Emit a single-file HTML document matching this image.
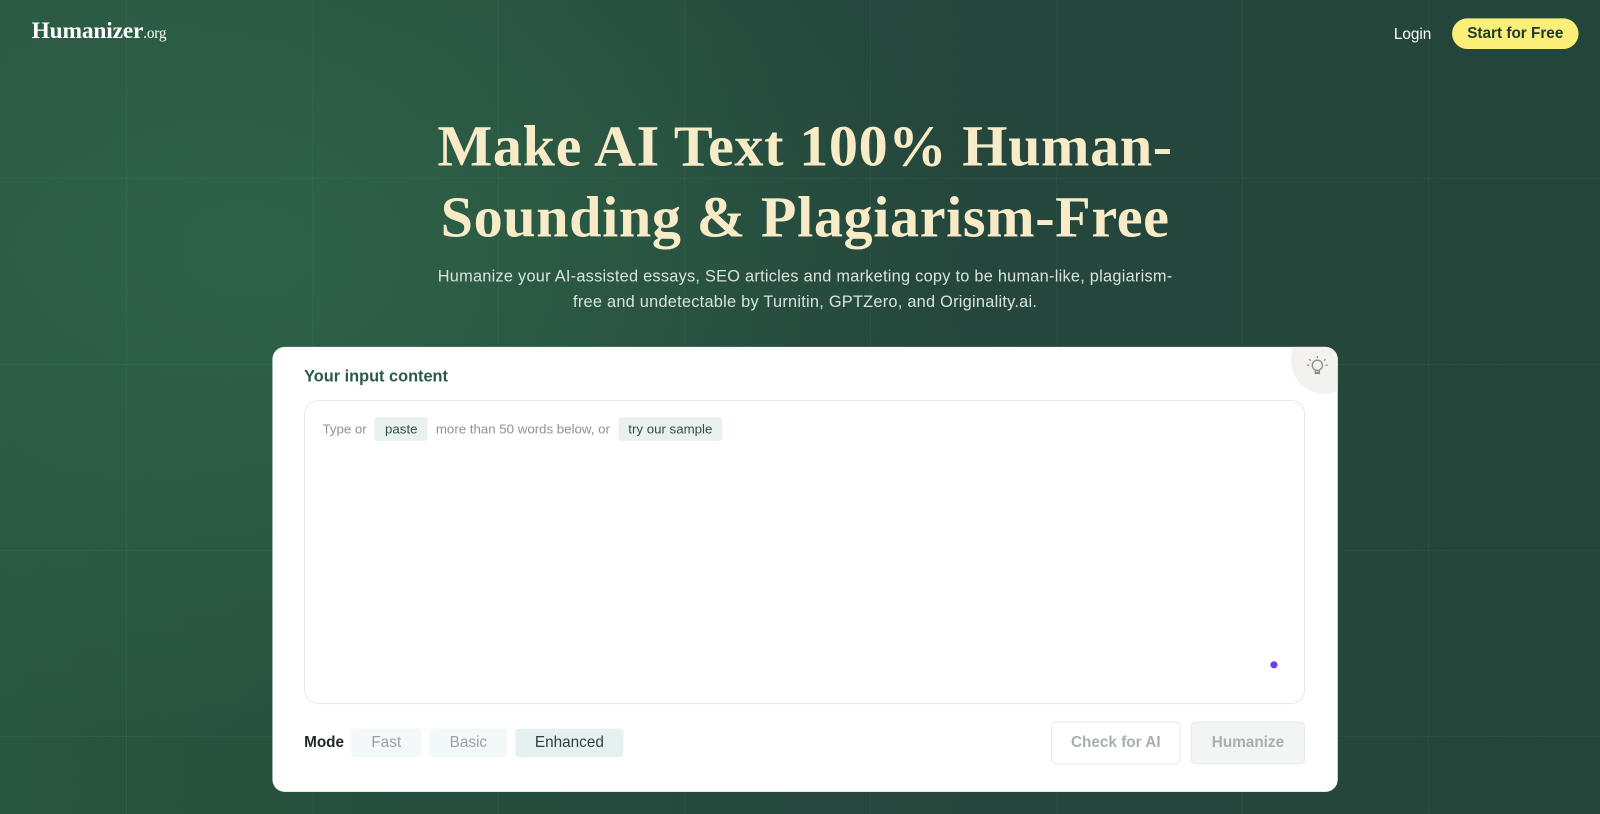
<!DOCTYPE html>
<html><head><meta charset="utf-8"><style>
*{margin:0;padding:0;box-sizing:border-box}
html,body{width:1600px;height:814px;overflow:hidden}
body{font-family:"Liberation Sans",sans-serif;
background:radial-gradient(ellipse 700px 500px at 250px 250px,#2e6348 0%,rgba(46,99,72,0) 100%),linear-gradient(90deg,#29563f 0%,#25473d 50%,#24453a 100%);position:relative}
.wrap{position:absolute;left:0;top:0;width:1568px;height:798px;transform:scale(1.0204);transform-origin:0 0}
.grid{position:absolute;inset:0;background-image:linear-gradient(rgba(120,200,150,.07) 1px,transparent 1px),linear-gradient(90deg,rgba(120,200,150,.07) 1px,transparent 1px);background-size:186px 186px;background-position:-60px -8px}
.logo{position:absolute;left:31px;top:17px;font-family:"Liberation Serif",serif;color:#fff;font-size:23px;font-weight:bold;letter-spacing:-.2px}
.logo small{font-size:15px;font-weight:normal}
.login{position:absolute;left:1366px;top:25px;color:#fff;font-size:15px}
.start{position:absolute;left:1423px;top:18px;width:124px;height:30px;border-radius:15px;background:#fbef7a;color:#1e3a2e;font-size:15px;font-weight:bold;text-align:center;line-height:30px}
h1{position:absolute;left:0;width:1578px;top:109px;text-align:center;font-family:"Liberation Serif",serif;font-weight:bold;font-size:57px;letter-spacing:.6px;line-height:70px;color:#f8ecc8}
.sub{position:absolute;left:0;width:1578px;top:259px;text-align:center;color:#d8e3dc;font-size:16px;letter-spacing:.25px;line-height:25px}
.card{position:absolute;left:267px;top:340px;width:1044px;height:436px;background:#fff;border-radius:12px;overflow:hidden}
.bulb{position:absolute;right:-20px;top:-20px;width:66px;height:66px;border-radius:50%;background:#f3f2f0}
.lbl{position:absolute;left:31px;top:21px;color:#2a5a48;font-size:16px;font-weight:bold}
.ta{position:absolute;left:31px;top:52px;width:981px;height:298px;border:1px solid #e6e9e8;border-radius:14px}
.hint{position:absolute;left:17px;top:16px;font-size:13px;color:#8c9490;display:flex;align-items:center}
.chip{background:#e9f1ef;color:#2f4f45;padding:4px 10px;border-radius:3px;margin:0 8px}
.dot{position:absolute;left:946px;top:255px;width:7px;height:7px;border-radius:50%;background:#6b3cf0}
.mode{position:absolute;left:31px;top:379px;font-size:15px;font-weight:bold;color:#1f2a27}
.m{position:absolute;top:374px;height:28px;border-radius:4px;background:#f3f8f8;color:#98a3a0;font-size:15px;text-align:center;line-height:28px}
.btn{position:absolute;top:367px;height:42px;border-radius:5px;font-size:15px;font-weight:bold;color:#a7b0ad;text-align:center;line-height:40px;border:1px solid #e6e9e8}
</style></head><body>
<div class="grid"></div>
<div class="wrap">
<div class="logo">Humanizer<small>.org</small></div>
<div class="login">Login</div>
<div class="start">Start for Free</div>
<h1>Make AI Text 100% Human-<br>Sounding &amp; Plagiarism-Free</h1>
<div class="sub">Humanize your AI-assisted essays, SEO articles and marketing copy to be human-like, plagiarism-<br>free and undetectable by Turnitin, GPTZero, and Originality.ai.</div>
<div class="card">
<div class="bulb"><svg style="position:absolute;left:14px;top:27px" width="24" height="24" viewBox="0 0 24 24" fill="none" stroke="#8a8f8c" stroke-width="1.3"><circle cx="12" cy="11" r="5"/><path d="M10 16v3h4v-3M10 18h4M12 2v2M4 5l1.5 1.5M20 5l-1.5 1.5M2 11h2M20 11h2"/></svg></div>
<div class="lbl">Your input content</div>
<div class="ta"><div class="hint">Type or <span class="chip">paste</span> more than 50 words below, or <span class="chip">try our sample</span></div><div class="dot"></div></div>
<div class="mode">Mode</div>
<div class="m" style="left:77px;width:69px">Fast</div>
<div class="m" style="left:154px;width:76px">Basic</div>
<div class="m" style="left:238px;width:106px;background:#e5f0f1;color:#2f3e3b">Enhanced</div>
<div class="btn" style="left:763px;width:127px;background:#fff">Check for AI</div>
<div class="btn" style="left:900px;width:112px;background:#f3f5f5">Humanize</div>
</div>
</div>
</body></html>
